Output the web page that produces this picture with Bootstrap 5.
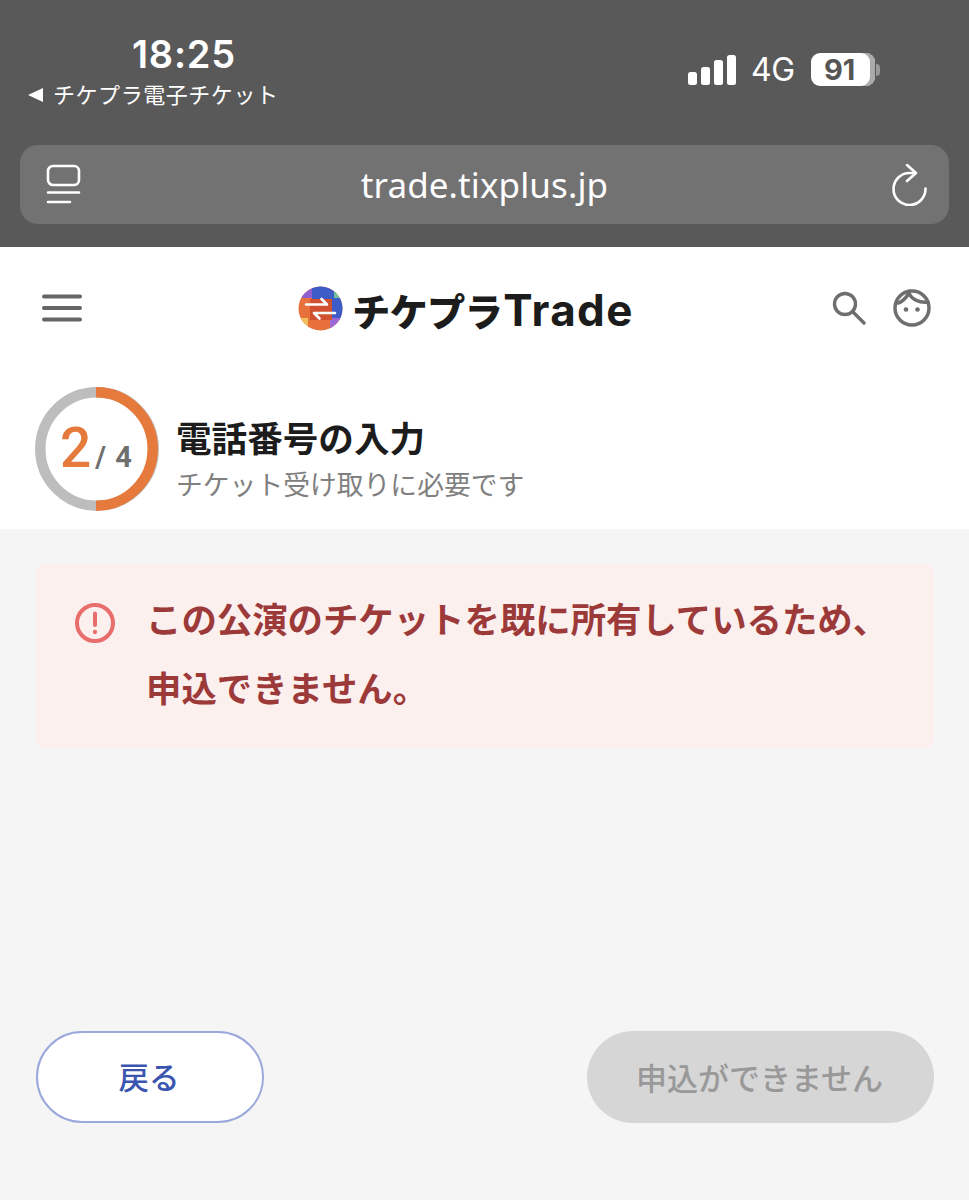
<!DOCTYPE html>
<html lang="ja">
<head>
<meta charset="utf-8">
<title>チケプラTrade</title>
<link href="https://cdn.jsdelivr.net/npm/bootstrap@5.3.0/dist/css/bootstrap.min.css" rel="stylesheet">
<style>
html,body{margin:0;background:#f5f5f5;}
body{font-family:"Noto Sans CJK JP","Noto Sans",sans-serif;overflow:hidden;}
.pg{width:969px;height:1200px;background:#f5f5f5;}
.chrome{height:247px;background:#595959;color:#fff;}
.stat{height:145px;padding:0 0 0 28px;}
.clock{width:312px;flex:none;}
.clock-t{font-family:Inter,"Liberation Sans",sans-serif;font-size:38px;font-weight:600;line-height:44px;padding-top:32px;letter-spacing:.8px;width:312px;text-align:center;}
.clock-b{font-size:22px;line-height:30px;margin-top:2px;letter-spacing:.55px;white-space:nowrap;}
.tri{font-size:0;display:inline-block;width:0;height:0;border-top:7px solid transparent;border-bottom:7px solid transparent;border-right:15px solid #fff;margin-right:10px;vertical-align:1px;}
.sig{margin-left:348px;padding-top:53px;gap:15px;}
.bars{gap:4px;height:32px;}
.bars i{display:block;width:9px;background:#fff;border-radius:2.5px;}
.fourg{font-family:Inter,"Liberation Sans",sans-serif;font-size:32px;line-height:36px;letter-spacing:-.5px;margin-top:-1px;margin-right:1px;}
.batt{width:64px;height:33px;background:#fff;border-radius:9px;color:#555;font-family:Inter,"Liberation Sans",sans-serif;font-size:29px;font-weight:700;line-height:33px;padding-right:6px;text-align:center;overflow:hidden;box-shadow:inset -5px 0 0 #aaa;}
.nub{width:4px;height:12px;background:#9a9a9a;border-radius:0 4px 4px 0;margin-left:1px;}
.urlb{height:79px;margin:0 20px;background:#727272;border-radius:18px;padding:0 22px 0 26px;}
.urlt{font-family:"Noto Sans",sans-serif;font-size:35px;letter-spacing:.1px;line-height:79px;color:#fff;margin-left:-4px;}
.wh{background:#fff;height:282px;}
.hdr{height:122px;padding:0 38px 0 42px;}
.logo-w{gap:9px;color:#1c1c1c;margin-left:18px;}
.logo-t{font-size:38px;font-weight:900;line-height:48px;letter-spacing:-.5px;white-space:nowrap;padding-top:3px;}
.logo-l{font-family:Inter,"Noto Sans",sans-serif;font-size:44px;font-weight:700;letter-spacing:1.4px;margin-left:1px;}
.hicons{gap:27px;}
.step{padding:18px 0 0 35px;gap:17px;}
.ringw{width:124px;height:124px;position:relative;}
.ringw svg{position:absolute;inset:0;}
.ringt{position:relative;height:124px;padding-left:25px;padding-top:26px;font-family:Roboto,"Noto Sans",sans-serif;white-space:nowrap;}
.n1{color:#e67a3c;font-size:55px;font-weight:500;line-height:70px;}
.n2{color:#6f6f6f;font-size:29px;font-weight:700;margin-left:4px;letter-spacing:1px;}
.ti{font-size:35.6px;font-weight:700;line-height:44px;color:#1c1c1c;white-space:nowrap;padding-top:28px;}
.su{font-size:26.8px;line-height:38px;color:#808080;white-space:nowrap;margin-top:6px;}
.alrt{margin:35px 35px 0 36px;height:184px;background:#fcf0ef;border-radius:8px;padding:19px 0 0 39px;gap:32px;color:#9c3a3a;}
.alrt svg{margin-top:20px;flex:none;}
.alrt-t{font-size:35.4px;font-weight:700;line-height:69px;white-space:nowrap;margin-left:-1px;}
.acts{margin:283px 35px 0 36px;}
.bk{width:228px;height:92px;border:2.5px solid #9aa8dc!important;background:#fff!important;color:#3a55b0!important;font-size:30.5px!important;font-weight:500;line-height:1;border-radius:46px!important;padding:0 2px 2px 0;}
.ng{width:347px;height:92px;background:#d6d6d6!important;border:0!important;color:#999!important;font-size:31px!important;font-weight:500;line-height:1;border-radius:46px!important;opacity:1!important;padding:0 2px 2px 0;}
</style>
</head>
<body>
<div class="pg">
  <div class="chrome">
    <div class="stat d-flex">
      <div class="clock">
        <div class="clock-t">18:25</div>
        <div class="clock-b"><span class="tri"></span>チケプラ電子チケット</div>
      </div>
      <div class="sig d-flex align-items-start">
        <div class="bars d-flex align-items-end">
          <i style="height:13px"></i><i style="height:18px"></i><i style="height:25px"></i><i style="height:30px"></i>
        </div>
        <div class="fourg">4G</div>
        <div class="d-flex align-items-center">
          <div class="batt">91</div><div class="nub"></div>
        </div>
      </div>
    </div>
    <div class="urlb d-flex align-items-center justify-content-between">
      <svg width="36" height="42" viewBox="0 0 36 42" fill="none" stroke="#fff" stroke-width="2.6" stroke-linecap="round">
        <rect x="2" y="2" width="31" height="19" rx="5"/>
        <path d="M2 28.500H33M2 38H24"/>
      </svg>
      <div class="urlt">trade.tixplus.jp</div>
      <svg width="36" height="42" viewBox="0 0 36 42" fill="none" stroke="#fff" stroke-width="2.6" stroke-linecap="round" stroke-linejoin="round">
        <path d="M24 9H18.500A16 16 0 1 0 34.500 24.500"/>
        <path d="M16 1L25 9L16 17"/>
      </svg>
    </div>
  </div>

  <div class="wh">
    <div class="hdr d-flex align-items-center justify-content-between">
      <svg width="40" height="28" viewBox="0 0 40 28" stroke="#666" stroke-width="4" stroke-linecap="round">
        <path d="M2 2.500H38M2 14H38M2 25.500H38"/>
      </svg>
      <div class="logo-w d-flex align-items-center">
        <svg width="45" height="45" viewBox="0 0 45 45">
          <defs><clipPath id="lc"><circle cx="22.500" cy="22.500" r="22"/></clipPath></defs>
          <g clip-path="url(#lc)">
            <rect width="45" height="45" fill="#e8703a"/>
            <rect x="0" y="0" width="16" height="12" fill="#8f5fd0"/>
            <rect x="14" y="0" width="24" height="14" fill="#3e5cc8"/>
            <rect x="36" y="0" width="9" height="13" fill="#6fc09a"/>
            <rect x="32" y="12" width="13" height="22" fill="#3e5cc8"/>
            <rect x="32" y="32" width="13" height="13" fill="#9b68d8"/>
            <rect x="12" y="13" width="22" height="21" fill="#d1502f"/>
            <rect x="0" y="32" width="10" height="13" fill="#f0c060"/>
          </g>
          <path d="M8 18.500H29L23.500 13M37 27H16L21.500 32.500" fill="none" stroke="#fff" stroke-width="2.600" stroke-linecap="round" stroke-linejoin="round"/>
        </svg>
        <div class="logo-t">チケプラ<span class="logo-l">Trade</span></div>
      </div>
      <div class="hicons d-flex align-items-center">
        <svg width="34" height="34" viewBox="0 0 34 34" fill="none" stroke="#6e6e6e" stroke-width="3.400" stroke-linecap="round">
          <circle cx="13" cy="13" r="10.500"/><path d="M21 21L32 32"/>
        </svg>
        <svg width="38" height="38" viewBox="0 0 38 38" fill="none" stroke="#6e6e6e" stroke-width="3.500" stroke-linecap="round">
          <circle cx="19" cy="19" r="17"/>
          <path d="M5 14C9 13 13 9 16 4C18 10 26 14 35 13"/>
          <circle cx="13" cy="20.500" r="2.300" fill="#6e6e6e" stroke="none"/>
          <circle cx="24.500" cy="20.500" r="2.300" fill="#6e6e6e" stroke="none"/>
        </svg>
      </div>
    </div>
    <div class="step d-flex">
      <div class="ringw">
        <svg width="124" height="124" viewBox="0 0 124 124" fill="none" stroke-width="10.500">
          <circle cx="62" cy="62" r="56.700" stroke="#bdbdbd"/>
          <path d="M61 5.300A56.700 56.700 0 0 1 61 118.700" stroke="#e67a3c"/>
        </svg>
        <div class="ringt"><span class="n1">2</span><span class="n2">/ 4</span></div>
      </div>
      <div>
        <div class="ti">電話番号の入力</div>
        <div class="su">チケット受け取りに必要です</div>
      </div>
    </div>
  </div>

  <div class="alrt d-flex">
    <svg width="40" height="40" viewBox="0 0 40 40" fill="none" stroke="#e86d6d" stroke-width="4" stroke-linecap="round">
      <circle cx="20" cy="20" r="18"/>
      <path d="M20 10.500V22"/>
      <circle cx="20" cy="29" r="1.400" fill="#e86d6d" stroke-width="1.500"/>
    </svg>
    <div class="alrt-t">この公演のチケットを既に所有しているため、<br>申込できません。</div>
  </div>

  <div class="acts d-flex justify-content-between">
    <button type="button" class="btn bk">戻る</button>
    <button type="button" class="btn ng" disabled>申込ができません</button>
  </div>
</div>
<script src="https://cdn.jsdelivr.net/npm/bootstrap@5.3.0/dist/js/bootstrap.bundle.min.js"></script>
</body>
</html>
